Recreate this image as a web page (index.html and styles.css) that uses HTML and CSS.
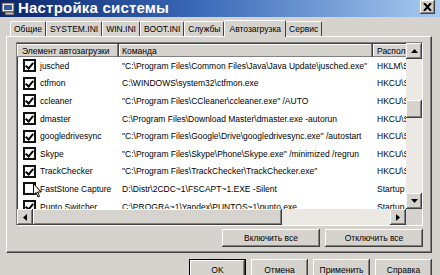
FILE: index.html
```
<!DOCTYPE html>
<html lang="ru">

<head>
  <meta charset="UTF-8">
  <meta name="viewport" content="width=device-width, initial-scale=1.0">
  <title>Настройка системы</title>
  <link rel="stylesheet" href="styles.css">
</head>

<body>
  <div class="window">
    <div class="titlebar">
      <svg class="app-icon" width="15" height="15" viewBox="0 0 15 15">
        <rect x="1" y="2" width="12" height="9" fill="#e8e8e8" stroke="#404040" />
        <rect x="3" y="4" width="8" height="5" fill="#3a5a9a" />
        <rect x="4" y="11" width="9" height="3" fill="#c0c0c0" stroke="#404040" />
      </svg>
      <span class="title">Настройка системы</span>
      <button class="close">
        <svg width="9" height="8" viewBox="0 0 9 8">
          <path d="M1 0 L8 8 M8 0 L1 8" stroke="#000" stroke-width="2" />
        </svg>
      </button>
    </div>

    <div class="tabs">
      <span class="tab">Общие</span>
      <span class="tab">SYSTEM.INI</span>
      <span class="tab">WIN.INI</span>
      <span class="tab">BOOT.INI</span>
      <span class="tab">Службы</span>
      <span class="tab active">Автозагрузка</span>
      <span class="tab">Сервис</span>
    </div>

    <div class="panel">
      <div class="list">
        <div class="view">
          <div class="row header">
            <div class="col name">Элемент автозагрузки</div>
            <div class="col cmd">Команда</div>
            <div class="col loc">Расположение</div>
          </div>

          <div class="row">
            <div class="col name"><span class="check on"></span>jusched</div>
            <div class="col cmd">"C:\Program Files\Common Files\Java\Java Update\jusched.exe"</div>
            <div class="col loc">HKLM\SOFTWARE</div>
          </div>
          <div class="row">
            <div class="col name"><span class="check on"></span>ctfmon</div>
            <div class="col cmd">C:\WINDOWS\system32\ctfmon.exe</div>
            <div class="col loc">HKCU\SOFTWARE</div>
          </div>
          <div class="row">
            <div class="col name"><span class="check on"></span>ccleaner</div>
            <div class="col cmd">"C:\Program Files\CCleaner\ccleaner.exe" /AUTO</div>
            <div class="col loc">HKCU\SOFTWARE</div>
          </div>
          <div class="row">
            <div class="col name"><span class="check on"></span>dmaster</div>
            <div class="col cmd">C:\Program Files\Download Master\dmaster.exe -autorun</div>
            <div class="col loc">HKCU\SOFTWARE</div>
          </div>
          <div class="row">
            <div class="col name"><span class="check on"></span>googledrivesync</div>
            <div class="col cmd">"C:\Program Files\Google\Drive\googledrivesync.exe" /autostart</div>
            <div class="col loc">HKCU\SOFTWARE</div>
          </div>
          <div class="row">
            <div class="col name"><span class="check on"></span>Skype</div>
            <div class="col cmd">"C:\Program Files\Skype\Phone\Skype.exe" /minimized /regrun</div>
            <div class="col loc">HKCU\SOFTWARE</div>
          </div>
          <div class="row">
            <div class="col name"><span class="check on"></span>TrackChecker</div>
            <div class="col cmd">"C:\Program Files\TrackChecker\TrackChecker.exe"</div>
            <div class="col loc">HKCU\SOFTWARE</div>
          </div>
          <div class="row">
            <div class="col name"><span class="check"></span>FastStone Capture</div>
            <div class="col cmd">D:\Distr\2CDC~1\FSCAPT~1.EXE -Silent</div>
            <div class="col loc">Startup</div>
          </div>
          <div class="row">
            <div class="col name"><span class="check on"></span>Punto Switcher</div>
            <div class="col cmd">C:\PROGRA~1\Yandex\PUNTOS~1\punto.exe</div>
            <div class="col loc">Startup</div>
          </div>
        </div>

        <div class="vscroll">
          <span class="sbtn"><svg width="7" height="4" viewBox="0 0 7 4"><path d="M3.5 0 L7 4 L0 4 Z" /></svg></span>
          <span class="track"><span class="thumb"></span></span>
          <span class="sbtn"><svg width="7" height="4" viewBox="0 0 7 4"><path d="M0 0 L7 0 L3.5 4 Z" /></svg></span>
        </div>
        <div class="hscroll">
          <span class="sbtn"><svg width="4" height="7" viewBox="0 0 4 7"><path d="M0 3.5 L4 0 L4 7 Z" /></svg></span>
          <span class="track"><span class="thumb"></span></span>
          <span class="sbtn"><svg width="4" height="7" viewBox="0 0 4 7"><path d="M0 0 L4 3.5 L0 7 Z" /></svg></span>
        </div>
        <div class="corner"></div>
      </div>

      <div class="panel-buttons">
        <button class="btn wide">Включить все</button>
        <button class="btn wide">Отключить все</button>
      </div>

      <svg class="cursor" width="9" height="15" viewBox="0 0 9 15">
        <path d="M0.5 0.5 L0.5 12 L3 9.5 L5 14 L6.5 13.3 L4.6 9 L8 9 Z" fill="#fff" stroke="#000" stroke-width="1" />
      </svg>
    </div>

    <div class="footer">
      <button class="btn default">OK</button>
      <button class="btn">Отмена</button>
      <button class="btn">Применить</button>
      <button class="btn">Справка</button>
    </div>
  </div>
</body>

</html>
```

FILE: styles.css
```
body {
  margin: 0;
  background: #d4d0c8;
  font-family: "Liberation Sans", Arial, sans-serif;
  font-size: 8.5px;
  color: #000;
}

.window {
  width: 440px;
  height: 275px;
  overflow: hidden;
  background: #d6d3ce;
}

/* title bar */
.titlebar {
  height: 17px;
  display: flex;
  align-items: center;
  background: linear-gradient(to right, #0a246a, #3a6ab8 45%, #a6caf0);
}

.app-icon {
  margin-left: 1px;
  flex: none;
}

.title {
  margin-left: 2px;
  color: #fff;
  font-weight: bold;
  font-size: 15px;
  letter-spacing: 0.2px;
  line-height: 17px;
  margin-top: -3px;
}

.close {
  margin-left: auto;
  margin-right: 5px;
  margin-top: -3px;
  width: 15px;
  height: 14px;
  padding: 0;
  border: none;
  background: #d4d0c8;
  box-shadow: inset -1px -1px #404040, inset 1px 1px #fff, inset -2px -2px #808080;
  display: flex;
  align-items: center;
  justify-content: center;
}

/* tabs */
.tabs {
  display: flex;
  align-items: flex-end;
  height: 16px;
  margin: 3px 0 0 10px;
}

.tab {
  height: 14px;
  line-height: 14px;
  padding: 0 3px;
  border-left: 1px solid #fff;
  border-top: 1px solid #fff;
  border-right: 1px solid #404040;
  border-radius: 2px 2px 0 0;
  white-space: nowrap;
}

.tab.active {
  height: 16px;
  line-height: 16px;
  padding: 0 4px;
  margin: 0 -1px 0 0;
  background: #d6d3ce;
  position: relative;
  z-index: 1;
  margin-bottom: -1px;
}

/* page */
.panel {
  position: relative;
  height: 210px;
  margin: 0 8px 0 6px;
  border: 1px solid #fff;
  border-right-color: #404040;
  border-bottom-color: #404040;
  box-shadow: inset -1px -1px #808080;
  padding: 5px 8px 0 9px;
}

.list {
  height: 182px;
  border: 1px solid #808080;
  border-right-color: #fff;
  border-bottom-color: #fff;
  background: #fff;
  display: grid;
  grid-template-columns: 1fr 16px;
  grid-template-rows: 1fr 16px;
  box-shadow: inset 1px 1px #404040;
}

.view {
  overflow: hidden;
  padding: 1px 0 0 0;
}

.row {
  display: flex;
  height: 17.6px;
  align-items: center;
  white-space: nowrap;
}

.col {
  flex: none;
  overflow: hidden;
  display: flex;
  align-items: center;
}

.name {
  width: 96px;
  padding-left: 6px;
}

.cmd {
  width: 251px;
  padding-left: 3px;
}

.loc {
  width: 80px;
  padding-left: 4px;
}

.row.header {
  height: 13px;
  background: #d6d3ce;
}

.header .col {
  height: 13px;
  box-shadow: inset -1px -1px #808080, inset 1px 1px #fff;
  border-right: 1px solid #404040;
  box-sizing: border-box;
}

.header .name {
  width: 102px;
  padding-left: 5px;
}

.header .cmd {
  width: 254px;
}

.check {
  flex: none;
  width: 9px;
  height: 9px;
  border: 2px solid #111;
  background: #fff;
  margin-right: 4px;
  position: relative;
}

.check.on::after {
  content: "";
  position: absolute;
  left: 2px;
  top: 0;
  width: 3px;
  height: 6px;
  border: solid #000;
  border-width: 0 2px 2px 0;
  transform: rotate(40deg);
}

/* scroll bars */
.vscroll,
.hscroll {
  display: flex;
  background: #ece9e4;
}

.vscroll {
  flex-direction: column;
}

.sbtn {
  flex: none;
  width: 16px;
  height: 16px;
  background: #d6d3ce;
  box-shadow: inset -1px -1px #404040, inset 1px 1px #fff, inset -2px -2px #808080;
  display: flex;
  align-items: center;
  justify-content: center;
}

.track {
  flex: 1;
  display: flex;
}

.vscroll .track {
  flex-direction: column;
}

.thumb {
  background: #d6d3ce;
  box-shadow: inset -1px -1px #404040, inset 1px 1px #fff, inset -2px -2px #808080;
}

.vscroll .thumb {
  margin-top: 41px;
  height: 18px;
}

.hscroll .thumb {
  width: 249px;
}

.corner {
  background: #d6d3ce;
}

/* buttons */
.btn {
  font: inherit;
  background: #d6d3ce;
  border: none;
  padding: 0;
  box-shadow: inset -1px -1px #404040, inset 1px 1px #fff, inset -2px -2px #808080;
  color: #000;
}

.panel-buttons {
  display: flex;
  justify-content: flex-end;
  gap: 5px;
  margin-top: 3px;
}

.btn.wide {
  width: 98px;
  height: 18px;
}

.footer {
  display: flex;
  justify-content: flex-end;
  gap: 5px;
  padding: 6px 8px 0 0;
}

.footer .btn {
  width: 57px;
  height: 22px;
}

.btn.default {
  outline: 1px solid #000;
  outline-offset: -1px;
  box-shadow: inset -2px -2px #404040, inset 2px 2px #fff, inset -3px -3px #808080;
}

.cursor {
  position: absolute;
  left: 26px;
  top: 146px;
}
```
